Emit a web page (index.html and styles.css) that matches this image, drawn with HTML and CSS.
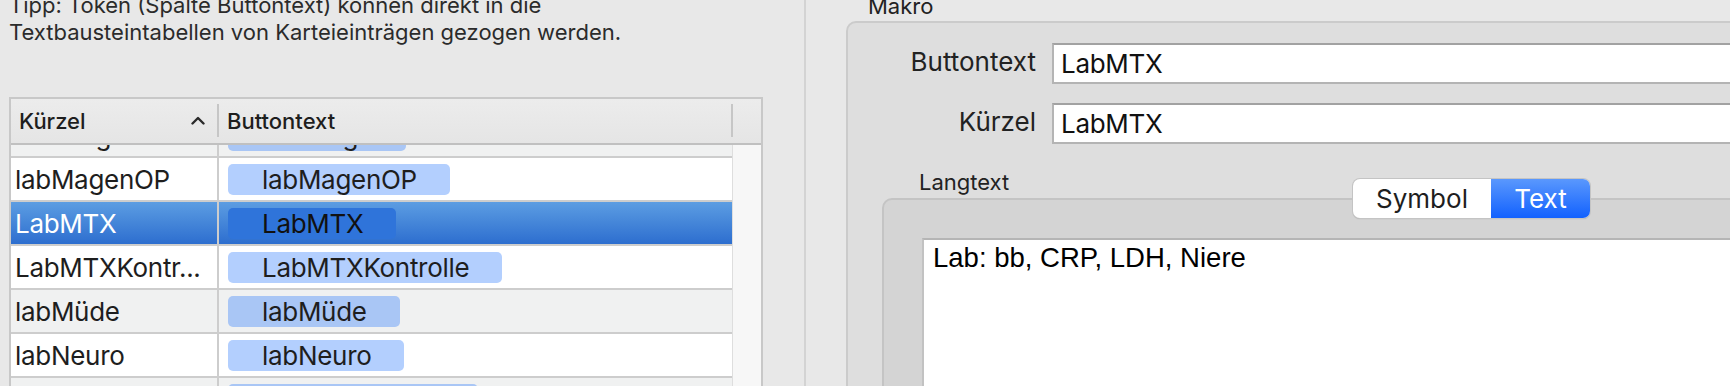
FILE: index.html
```html
<!DOCTYPE html>
<html lang="de">

<head>
    <meta charset="UTF-8">
    <meta name="viewport" content="width=device-width, initial-scale=1.0">
    <title>Makros</title>
    <link rel="stylesheet" href="styles.css">
</head>

<body>
    <div class="window">
        <!-- linke Seite: Liste der Makros -->
        <div class="left-pane">
            <p class="tip">Tipp: Token (Spalte Buttontext) können direkt in die<br>Textbausteintabellen von Karteieinträgen gezogen werden.</p>

            <div class="table">
                <div class="thead">
                    <div class="th th-short">
                        <span>Kürzel</span>
                        <svg class="caret" width="14" height="9" viewBox="0 0 14 9">
                            <path d="M1.5 7.5 L7 2 L12.5 7.5" fill="none" stroke="#2a2a2a" stroke-width="2.4" stroke-linecap="round" stroke-linejoin="round"/>
                        </svg>
                    </div>
                    <div class="th-sep"></div>
                    <div class="th th-text">Buttontext</div>
                    <div class="th-sep"></div>
                    <div class="th th-rest"></div>
                </div>
                <div class="tbody">
                    <div class="rows">
                        <div class="row odd first">
                            <div class="cell cell-short">labLunge</div>
                            <div class="cell cell-text"><span class="token">labLunge</span></div>
                        </div>
                        <div class="row">
                            <div class="cell cell-short">labMagenOP</div>
                            <div class="cell cell-text"><span class="token">labMagenOP</span></div>
                        </div>
                        <div class="row selected">
                            <div class="cell cell-short">LabMTX</div>
                            <div class="cell cell-text"><span class="token">LabMTX</span></div>
                        </div>
                        <div class="row">
                            <div class="cell cell-short">LabMTXKontr...</div>
                            <div class="cell cell-text"><span class="token">LabMTXKontrolle</span></div>
                        </div>
                        <div class="row odd">
                            <div class="cell cell-short">labMüde</div>
                            <div class="cell cell-text"><span class="token">labMüde</span></div>
                        </div>
                        <div class="row">
                            <div class="cell cell-short">labNeuro</div>
                            <div class="cell cell-text"><span class="token">labNeuro</span></div>
                        </div>
                        <div class="row odd">
                            <div class="cell cell-short">labNierenwerte</div>
                            <div class="cell cell-text"><span class="token">labNierenwerte</span></div>
                        </div>
                    </div>
                    <div class="scroller"></div>
                </div>
            </div>
        </div>

        <!-- rechte Seite: Makro bearbeiten -->
        <div class="right-pane">
            <div class="group-title">Makro</div>
            <div class="group">
                <div class="field">
                    <label class="field-label">Buttontext</label>
                    <div class="input">LabMTX</div>
                </div>
                <div class="field">
                    <label class="field-label">Kürzel</label>
                    <div class="input">LabMTX</div>
                </div>

                <div class="lang-label">Langtext</div>
                <div class="lang-box">
                    <div class="segmented">
                        <span class="seg">Symbol</span>
                        <span class="seg seg-on">Text</span>
                    </div>
                    <div class="textarea">Lab: bb, CRP, LDH, Niere</div>
                </div>
            </div>
        </div>
    </div>
</body>

</html>
```

FILE: styles.css
```css
* {
    margin: 0;
    padding: 0;
    box-sizing: border-box;
}

body {
    width: 1730px;
    height: 386px;
    overflow: hidden;
    background-color: #e8e8e8;
    font-family: "Inter", "Roboto", sans-serif;
    color: #222;
}

.window {
    display: flex;
    height: 386px;
}

/* linke Seite */
.left-pane {
    width: 806px;
    padding-left: 9px;
    border-right: 2px solid #d3d3d3;
}

.tip {
    margin-top: -8px;
    font-size: 22px;
    line-height: 27px;
    color: #2b2b2b;
}

.table {
    margin-top: 51px;
    width: 754px;
    height: 400px;
    border: 2px solid #c8c8c8;
    border-bottom: none;
    background-color: #fff;
}

.thead {
    display: flex;
    height: 46px;
    background: linear-gradient(#ececec, #e5e5e5);
    border-bottom: 2px solid #c0c0c0;
}

.th {
    display: flex;
    align-items: center;
    font-size: 22px;
    font-weight: 500;
    color: #1e1e1e;
}

.th-short {
    width: 206px;
    padding-left: 8px;
    padding-right: 12px;
    justify-content: space-between;
}

.th-text {
    width: 512px;
    padding-left: 8px;
}

.th-rest {
    width: 28px;
}

.th-sep {
    width: 2px;
    margin: 5px 0 6px;
    background-color: #c6c6c6;
}

.caret {
    margin-top: -2px;
}

.tbody {
    display: flex;
    height: 260px;
    overflow: hidden;
}

.rows {
    width: 721px;
}

.scroller {
    width: 29px;
    background-color: #f7f7f7;
    border-left: 1px solid #dedede;
}

.row {
    display: flex;
    height: 44px;
    border-bottom: 2px solid #cdcdcd;
    background-color: #fff;
}

.row.first {
    margin-top: -31px;
}

.row.odd {
    background-color: #f0f1f1;
}

.row.selected {
    background: linear-gradient(#5c9de2, #2d6ecf);
}

.cell {
    display: flex;
    align-items: center;
    font-size: 26px;
    letter-spacing: -0.3px;
    color: #1e1e1e;
    white-space: nowrap;
}

.cell-short {
    width: 208px;
    padding-left: 4px;
    border-right: 2px solid #cdcdcd;
}

.cell-text {
    flex: 1;
    padding-left: 9px;
}

.token {
    height: 31px;
    line-height: 31px;
    padding: 0 33px 0 34px;
    border-radius: 5px;
    background-color: rgba(38, 118, 252, 0.35);
}

.selected .cell-short {
    color: #fff;
}

.selected .token {
    background-color: #2f74da;
    color: #111;
}

/* rechte Seite */
.right-pane {
    flex: 1;
    padding-left: 40px;
    overflow: hidden;
}

.group-title {
    margin-left: 22px;
    font-size: 22px;
    line-height: 12px;
    margin-bottom: 9px;
    color: #222;
}

.group {
    margin-right: -30px;
    height: 400px;
    padding-top: 20px;
    background-color: #dedede;
    border: 2px solid #cbcbcb;
    border-radius: 10px;
}

.field {
    display: flex;
    align-items: center;
    margin-bottom: 19px;
}

.field-label {
    width: 204px;
    padding-right: 16px;
    margin-top: -4px;
    text-align: right;
    font-size: 26px;
    color: #222;
}

.input {
    flex: 1;
    height: 41px;
    padding-left: 7px;
    line-height: 37px;
    font-size: 26px;
    letter-spacing: -0.3px;
    color: #111;
    background-color: #fff;
    border: 2px solid #b4b4b4;
    border-top-color: #a2a2a2;
}

.lang-label {
    margin-top: 26px;
    margin-left: 71px;
    font-size: 22px;
    line-height: 24px;
    color: #222;
}

.lang-box {
    position: relative;
    margin-top: 4px;
    margin-left: 34px;
    height: 300px;
    padding: 38px 0 0 38px;
    background-color: #d4d4d4;
    border: 2px solid #c4c4c4;
    border-radius: 10px;
}

.segmented {
    position: absolute;
    left: 469px;
    top: -21px;
    display: flex;
    height: 39px;
    border-radius: 7px;
    overflow: hidden;
    background-color: #fff;
    box-shadow: 0 0 0 1px #c4c4c4, 0 1px 1px rgba(0, 0, 0, 0.25);
}

.seg {
    display: flex;
    align-items: center;
    justify-content: center;
    font-size: 26px;
    color: #1e1e1e;
}

.seg:first-child {
    width: 138px;
}

.seg-on {
    width: 99px;
    color: #fff;
    background: linear-gradient(#5a98fd, #1261fe);
}

.textarea {
    height: 200px;
    padding: 2px 0 0 9px;
    font-family: "Liberation Sans", Arial, sans-serif;
    font-size: 27.5px;
    color: #000;
    background-color: #fff;
    border-top: 2px solid #b5b5b5;
    border-left: 2px solid #c2c2c2;
}
```
